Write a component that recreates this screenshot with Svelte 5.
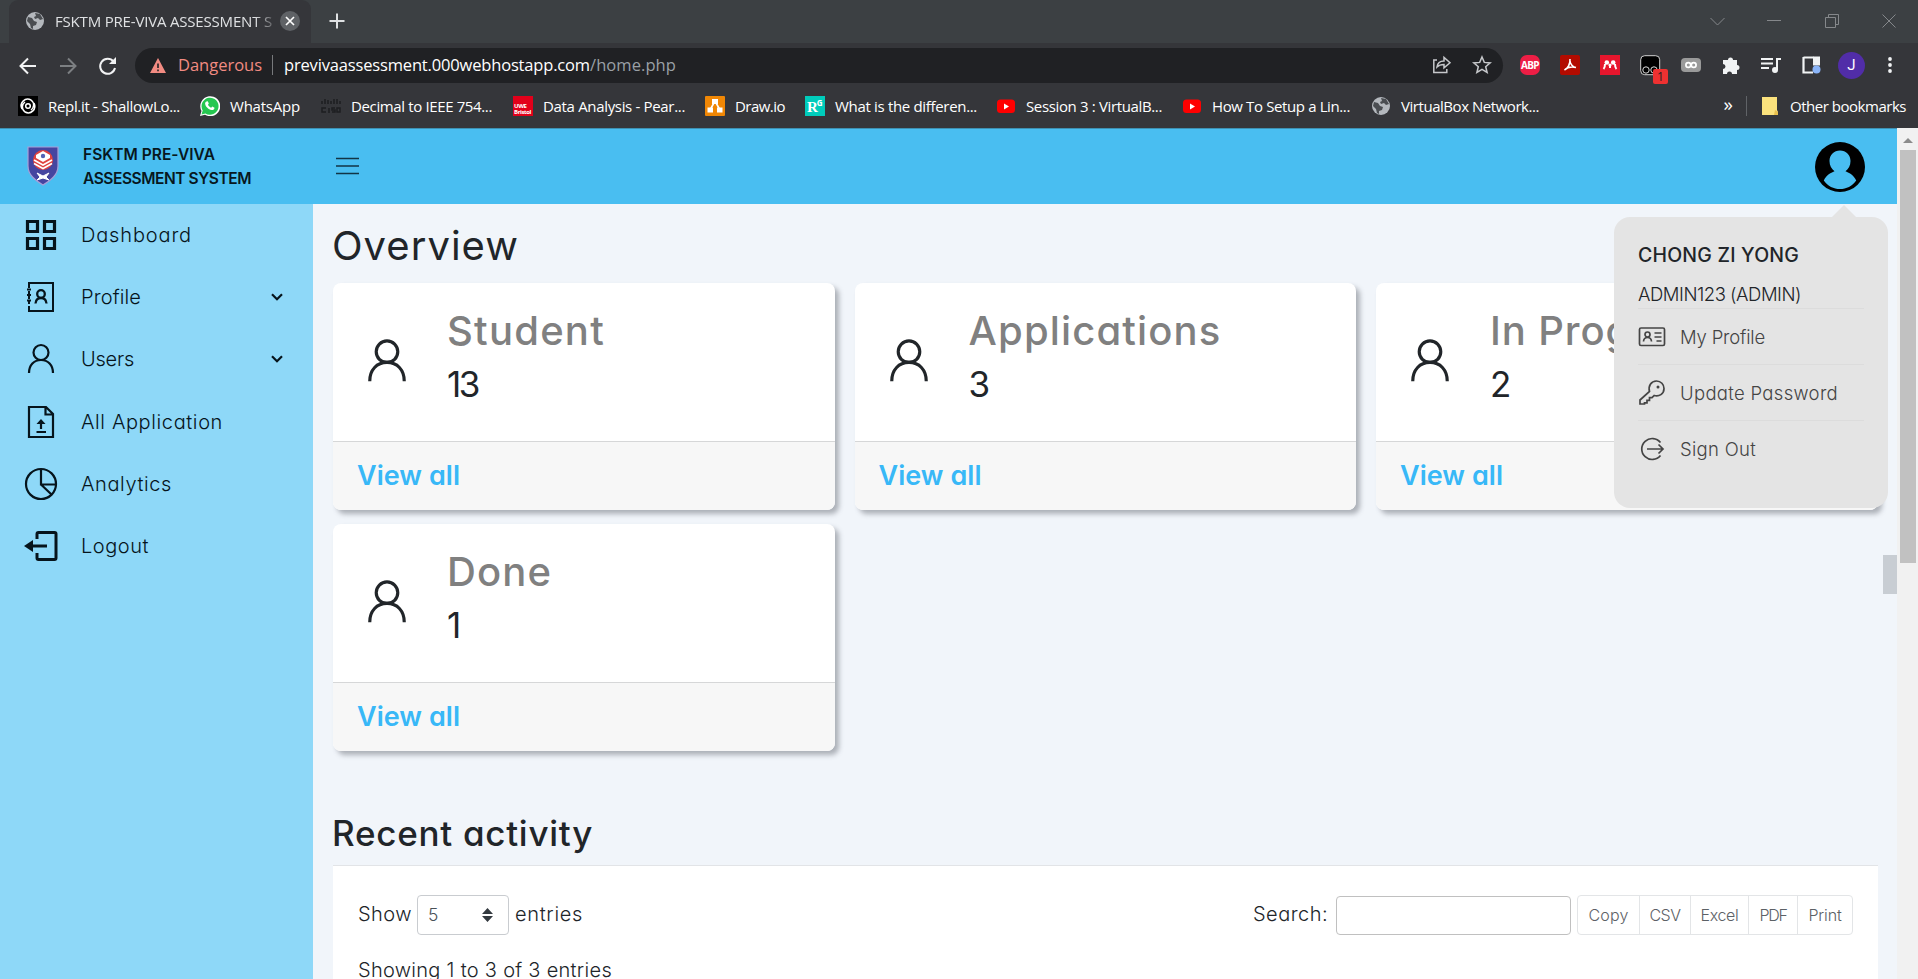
<script>
  // Spreads the letters of a label so that it fills the given width.
  function fit(node, width) {
    const n = node.textContent.length;
    node.style.letterSpacing = '0px';
    const natural = node.getBoundingClientRect().width;
    node.style.letterSpacing = (width - natural) / n + 'px';
  }

  const bookmarks = [
    { icon: 'replit', text: 'Repl.it - ShallowLo...', w: 132, gap: 20 },
    { icon: 'whatsapp', text: 'WhatsApp', w: 70, gap: 21 },
    { icon: 'cisco', text: 'Decimal to IEEE 754...', w: 141, gap: 21 },
    { icon: 'uwe', text: 'Data Analysis - Pear...', w: 142, gap: 20 },
    { icon: 'drawio', text: 'Draw.io', w: 50, gap: 20 },
    { icon: 'rg', text: 'What is the differen...', w: 142, gap: 19 },
    { icon: 'yt', text: 'Session 3 : VirtualB...', w: 136, gap: 20 },
    { icon: 'yt', text: 'How To Setup a Lin...', w: 138, gap: 21 },
    { icon: 'globe', text: 'VirtualBox Network...', w: 138, gap: 0 }
  ];

  const menu = [
    { icon: 'grid', text: 'Dashboard', w: 111 },
    { icon: 'contact', text: 'Profile', w: 60, more: true },
    { icon: 'user', text: 'Users', w: 53, more: true },
    { icon: 'file', text: 'All Application', w: 142 },
    { icon: 'chart', text: 'Analytics', w: 91 },
    { icon: 'exit', text: 'Logout', w: 68 }
  ];

  const cards = [
    { title: 'Student', count: '13', w: 158, cw: 31 },
    { title: 'Applications', count: '3', w: 253, cw: 20 },
    { title: 'In Progress', count: '2', w: 226, cw: 20 },
    { title: 'Done', count: '1', w: 105, cw: 12 }
  ];

  const account = [
    { icon: 'card', text: 'My Profile', w: 85 },
    { icon: 'key', text: 'Update Password', w: 158 },
    { icon: 'signout', text: 'Sign Out', w: 76 }
  ];

  const exports = [
    { text: 'Copy', w: 40, box: 61 },
    { text: 'CSV', w: 31, box: 51 },
    { text: 'Excel', w: 38, box: 58 },
    { text: 'PDF', w: 27, box: 49 },
    { text: 'Print', w: 33, box: 55 }
  ];
</script>

{#snippet globe()}
  <svg width="20" height="20" viewBox="0 0 20 20"><circle cx="10" cy="10" r="9" fill="#b4b8bd" /><path d="M3 6l4 1 2 3 3 1-1 3-3 1v3l-2-1-1-4-3-3zM10 2l5 1 3 5-3 1-2-2-3 1-1-2 2-1z" fill="#4a4d51" /></svg>
{/snippet}

{#snippet person(size)}
  <svg width={size} height={size} viewBox="0 0 32 32" fill="none" stroke="currentColor" stroke-width="2.200"><circle cx="16" cy="9.500" r="7.500" /><path d="M4 30c0-8 5-13 12-13s12 5 12 13" /></svg>
{/snippet}

{#snippet bookmarkIcon(name)}
  {#if name === 'globe'}
    {@render globe()}
  {:else if name === 'replit'}
    <svg width="20" height="20" viewBox="0 0 20 20"><rect width="20" height="20" fill="#000" /><g fill="none" stroke="#fff" stroke-width="1.500"><circle cx="10" cy="10" r="2.300" /><path d="M4 13C1 7 7 1 13 4c4 3 3 8 0 10M16 7c3 6-3 12-9 9-4-3-3-8 0-10" /></g></svg>
  {:else if name === 'whatsapp'}
    <svg width="20" height="20" viewBox="0 0 20 20"><path d="M0 20l1.500-5A10 10 0 1 1 5 18.700z" fill="#fff" /><path d="M1.500 18.500l1.200-4A8.500 8.500 0 1 1 5.500 17.400z" fill="#25c750" /><path d="M6.500 5.500l1.300-.2 1 2.300-.8 1.200c.7 1.400 1.700 2.300 3.200 3l1-1.200 2.300 1.100c0 1.700-1.500 2.500-2.800 2.300-3.500-.6-6.400-3.600-6.600-6.500 0-.8.600-1.700 1.400-2z" fill="#fff" /></svg>
  {:else if name === 'cisco'}
    <svg width="20" height="20" viewBox="0 0 20 20" stroke="#1d1e21" stroke-width="1.500"><path d="M1 5v3M4 3v5M7 4v4M10 5v3M13 3v5M16 3v5M19 5v3" /><path d="M5 12H1v4h4M8 12v5M14 12h-3v2h3v2h-3M16 12h3v4h-3z" fill="none" /></svg>
  {:else if name === 'uwe'}
    <span class="tile uwe"><b>UWE<br />Bristol</b></span>
  {:else if name === 'drawio'}
    <svg width="20" height="20" viewBox="0 0 20 20"><rect width="20" height="20" rx="1" fill="#f08705" /><path d="M10 5L5 14M10 5l5 9" stroke="#fff" stroke-width="1.600" /><path d="M7 3h6v5H7zM2.500 11.500h5.500v5H2.500zM12 11.500h5.500v5H12z" fill="#fff" /></svg>
  {:else if name === 'rg'}
    <span class="tile rg">R<sup>G</sup></span>
  {:else}
    <svg width="20" height="20" viewBox="0 0 20 20"><rect x="1" y="3.500" width="18" height="13.500" rx="3.500" fill="#f00" /><path d="M8 7.500l5 3-5 3z" fill="#fff" /></svg>
  {/if}
{/snippet}

<div class="screen">
  <div class="tabs">
    <div class="tab">
      {@render globe()}
      <div class="tabtitle"><span use:fit={217}>FSKTM PRE-VIVA ASSESSMENT S</span></div>
      <svg class="close" width="20" height="20" viewBox="0 0 20 20"><circle cx="10" cy="10" r="10" fill="#5f6266" /><path d="M6 6l8 8M14 6l-8 8" stroke="#fff" stroke-width="1.700" /></svg>
    </div>
    <svg class="plus" width="16" height="16" viewBox="0 0 16 16"><path d="M8 .5v15M.5 8h15" stroke="#dfe1e3" stroke-width="2" /></svg>
    <svg class="winctl" width="188" height="20" viewBox="0 0 188 20" fill="none" stroke="#85888b" stroke-width="1"><path d="M1.500 6l7 7 7-7M58 8.500h14" /><path d="M116.500 5.500h10v10h-10zM119.500 5.500v-3h10v10h-3M173.500 2.500l13 13M186.500 2.500l-13 13" /></svg>
  </div>

  <div class="toolbar">
    <svg class="nav" width="100" height="22" viewBox="0 0 100 22" fill="none" stroke-width="2"><path d="M18 11H3M10 3.500L2.500 11l7.500 7.500" stroke="#f1f2f3" /><path d="M42 11h15M50 3.500l7.500 7.500-7.500 7.500" stroke="#7c7f82" /><path d="M95.500 6.500A7.500 7.500 0 1 0 97 13" stroke="#f1f2f3" /><path d="M98 2v7h-7z" fill="#f1f2f3" /></svg>
    <div class="address">
      <svg width="16" height="15" viewBox="0 0 16 15"><path d="M8 0l8 15H0z" fill="#f28b82" /><path d="M8 5.500v4.500M8 11.500v1.800" stroke="#202124" stroke-width="1.600" /></svg>
      <span class="danger" use:fit={84}>Dangerous</span>
      <i></i>
      <span class="host" use:fit={306}>previvaassessment.000webhostapp.com</span><span class="path" use:fit={86}>/home.php</span>
      <svg class="addricons" width="60" height="20" viewBox="0 0 60 20" fill="none" stroke="#c6c8cb" stroke-width="1.500"><path d="M5 5H1.800v12.500h13V14M5 12c.5-4 3.500-6 7-6V2.500l6 5.200-6 5.200V9.500c-3 0-5 .5-7 2.500z" /><path d="M50 2l2.300 5.400 5.900.5-4.500 3.900 1.400 5.700L50 14.400l-5.100 3.100 1.400-5.700-4.500-3.900 5.900-.5z" /></svg>
    </div>
    <div class="ext">
      <span class="abp">ABP</span>
      <svg width="20" height="20" viewBox="0 0 20 20"><rect width="20" height="20" rx="2" fill="#b30b00" /><path d="M4.500 15c3-1 6-6 5.500-11M4.500 15c3-3 7-3.500 11.500-2.500M10 6c0 3 3 6 6 6.500" fill="none" stroke="#fff" stroke-width="1.600" /></svg>
      <svg width="20" height="20" viewBox="0 0 20 20"><rect width="20" height="20" fill="#e6162d" /><path d="M3.500 14c1-1 1.500-3 1.500-5M10 9v4M16.500 14c-1-1-1.500-3-1.500-5" stroke="#fff" stroke-width="2" fill="none" /><circle cx="6.800" cy="7.500" r="2.300" fill="#fff" /><circle cx="13.200" cy="7.500" r="2.300" fill="#fff" /><circle cx="10" cy="10" r="1.600" fill="#fff" /></svg>
      <span class="monkey"><svg width="21" height="21" viewBox="0 0 21 21"><rect x=".7" y=".7" width="19" height="19" rx="4" fill="#000" stroke="#d0d0d0" /><g fill="none" stroke="#ddd"><circle cx="6" cy="15" r="3.200" /><circle cx="14" cy="15" r="3.200" /></g></svg><b>1</b></span>
      <svg width="20" height="20" viewBox="0 0 20 20"><rect y="3" width="20" height="14" rx="4" fill="#9a9a9a" /><g fill="none" stroke="#fff" stroke-width="1.700"><circle cx="7.300" cy="10" r="2.400" /><circle cx="12.700" cy="10" r="2.400" /></g></svg>
      <svg width="20" height="20" viewBox="0 0 20 20"><path d="M2 5h5a2.500 2.500 0 1 1 5 0h4v5a2.500 2.500 0 1 1 0 5v4h-5a2.500 2.500 0 0 0-5 0H2v-5a2.500 2.500 0 0 0 0-5z" fill="#f1f3f4" /></svg>
      <svg width="20" height="20" viewBox="0 0 20 20" fill="none" stroke="#f1f3f4" stroke-width="2"><path d="M0 4h12M0 8.500h12M0 13h8M16 15V4h4" /><circle cx="14" cy="15" r="2" fill="#f1f3f4" /></svg>
      <svg width="20" height="20" viewBox="0 0 20 20"><path d="M2.500 2v15.500H12M2.500 2.500h10" fill="none" stroke="#f1f3f4" stroke-width="2.200" /><path d="M12 1.500h7v9h-7z" fill="#f1f3f4" /><circle cx="15.500" cy="14.500" r="4" fill="#8ab4f8" /></svg>
      <span class="me">J</span>
      <svg width="6" height="20" viewBox="0 0 6 20" fill="#f1f3f4"><circle cx="3" cy="4" r="1.900" /><circle cx="3" cy="10" r="1.900" /><circle cx="3" cy="16" r="1.900" /></svg>
    </div>
  </div>

  <div class="bookmarks">
    {#each bookmarks as b}
      <div class="bm" style:margin-right="{b.gap}px">{@render bookmarkIcon(b.icon)}<span style:width="{b.w}px"><span use:fit={b.w}>{b.text}</span></span></div>
    {/each}
    <span class="chev">»</span>
    <i></i>
    <svg width="16" height="18" viewBox="0 0 16 18"><path d="M0 0h15v13l1 2v3H0z" fill="#fbe27d" /><path d="M12 18l1-5 3 2v3z" fill="#e8c04e" /></svg>
    <span class="other"><span use:fit={116}>Other bookmarks</span></span>
  </div>

  <div class="page">
    <header>
      <svg class="logo" width="32" height="40" viewBox="0 0 32 40"><path d="M1 1h30v19c0 9-7 14-15 19C8 34 1 29 1 20z" fill="#4545a0" stroke="#a79fd8" stroke-width="1.200" /><circle cx="16" cy="14" r="10" fill="#e0433f" /><path d="M9 9l7-4 7 4v3l-7 4-7-4z" fill="#fff" /><circle cx="16" cy="10" r="2.200" fill="#5262b5" /><path d="M7 14l9 5 9-5M7 17.500l9 5 9-5" fill="none" stroke="#fff" stroke-width="1.600" /><path d="M10 27l6 3 6-3-3 4 3 3-6-2-6 2 3-3z" fill="#fff" stroke="#fff" /></svg>
      <div class="brand"><span use:fit={132}>FSKTM PRE-VIVA</span><br /><span use:fit={168}>ASSESSMENT SYSTEM</span></div>
      <svg class="burger" width="24" height="18" viewBox="0 0 24 18" stroke="#123546" stroke-width="1.500"><path d="M0 1.500h23M0 9h23M0 16.500h23" /></svg>
      <svg class="avatar" width="50" height="50" viewBox="0 0 50 50"><circle cx="25" cy="25" r="25" /><path d="M25 8.500c-6 0-10.500 4.500-10.500 10.500 0 4.500 2 8 5 10.200-4 1.600-8.500 4.300-10.700 9.200 4 5.600 9.800 8.600 16.200 8.600s12.200-3 16.200-8.600c-2.200-4.900-6.700-7.600-10.700-9.200 3-2.200 5-5.700 5-10.200 0-6-4.500-10.500-10.500-10.500z" fill="#49bef1" /></svg>
    </header>

    <div class="body">
      <aside>
        {#each menu as m}
          <div class="item">
            <span class="ico">
              {#if m.icon === 'grid'}
                <svg width="32" height="32" viewBox="0 0 32 32" fill="none" stroke="currentColor" stroke-width="3.200"><path d="M2.500 2.500h10v10h-10zM19.500 2.500h10v10h-10zM2.500 19.500h10v10h-10zM19.500 19.500h10v10h-10z" /></svg>
              {:else if m.icon === 'contact'}
                <svg width="32" height="32" viewBox="0 0 32 32" fill="none" stroke="currentColor" stroke-width="2"><path d="M4 7V2h24v28H4v-5M4 10v3M4 15v3M4 20v3M2 8.500h4M2 14h4M2 19.500h4" /><circle cx="16" cy="13" r="3.800" stroke-width="2.300" /><path d="M10.500 22.500c.3-3.700 2-5.500 5.500-5.500s5.200 1.800 5.500 5.500" stroke-width="2.300" /></svg>
              {:else if m.icon === 'user'}
                {@render person(32)}
              {:else if m.icon === 'file'}
                <svg width="32" height="34" viewBox="0 0 32 34" fill="none" stroke="currentColor" stroke-width="2.200"><path d="M4 2h17l7 7v23H4zM20.500 2v7.500H28M16 24V16M11.500 27h9.500" /><path d="M11.500 19l4.500-5 4.500 5z" fill="currentColor" stroke="none" /></svg>
              {:else if m.icon === 'chart'}
                <svg width="34" height="34" viewBox="0 0 34 34" fill="none" stroke="currentColor" stroke-width="2.200"><circle cx="17" cy="17" r="15" /><path d="M17 2v15.500h15M17 17.500l10.500 10" /></svg>
              {:else}
                <svg width="34" height="32" viewBox="0 0 34 32" fill="none" stroke="currentColor" stroke-width="3"><path d="M13 9V4q0-1.500 1.500-1.500h16Q32 2.500 32 4v24q0 1.500-1.500 1.500h-16Q13 29.500 13 28v-5M6 16h17" /><path d="M0 16l9-6v12z" fill="currentColor" stroke="none" /></svg>
              {/if}
            </span>
            <span use:fit={m.w}>{m.text}</span>
            {#if m.more}<svg class="down" width="12" height="8" viewBox="0 0 12 8" fill="none" stroke="currentColor" stroke-width="2.200"><path d="M1 1.200l5 5 5-5" /></svg>{/if}
          </div>
        {/each}
      </aside>

      <main>
        <h1><span use:fit={187}>Overview</span></h1>
        <div class="cards">
          {#each cards as c}
            <section>
              <div class="top">
                {@render person(50)}
                <div><h2><span use:fit={c.w}>{c.title}</span></h2><p><span use:fit={c.cw}>{c.count}</span></p></div>
              </div>
              <footer><span use:fit={103}>View all</span></footer>
            </section>
          {/each}
        </div>
        <h3><span use:fit={261}>Recent activity</span></h3>
        <div class="table">
          <div class="controls">
            <span use:fit={54}>Show</span>
            <div class="select">5<svg width="11" height="14" viewBox="0 0 11 14"><path d="M0 6l5.500-6L11 6zM0 8l5.500 6L11 8z" fill="#343a40" /></svg></div>
            <span use:fit={68}>entries</span>
            <span class="search"><span use:fit={75}>Search:</span></span>
            <div class="input"></div>
            <div class="btns">
              {#each exports as e}<div style:width="{e.box}px"><span use:fit={e.w}>{e.text}</span></div>{/each}
            </div>
          </div>
          <div class="info"><span use:fit={254}>Showing 1 to 3 of 3 entries</span></div>
        </div>
      </main>
    </div>

    <div class="dropdown">
      <div class="name"><span use:fit={161}>CHONG ZI YONG</span></div>
      <div class="role"><span use:fit={163}>ADMIN123 (ADMIN)</span></div>
      {#each account as a}
        <div class="acc">
          {#if a.icon === 'card'}
            <svg width="28" height="28" viewBox="0 0 28 28" fill="none" stroke="currentColor" stroke-width="1.700"><rect x="1.500" y="5" width="25" height="17.500" rx="1.500" /><circle cx="9.500" cy="11.500" r="2.500" /><path d="M5.500 18.500c.2-3 1.500-4 4-4s3.800 1 4 4M16.500 10h7M16.500 14h7M18.500 18h5" /></svg>
          {:else if a.icon === 'key'}
            <svg width="28" height="28" viewBox="0 0 28 28" fill="none" stroke="currentColor" stroke-width="1.700"><path d="M11.500 12.500C10 7 13 2 18.500 2c4.500 0 7.500 3.500 7.500 7.500 0 5.500-5 8.500-9.800 7l-2.200 2.200h-2.500v2.600H9v2.500H6.500V25H2v-4z" /><circle cx="20" cy="8" r="1.500" fill="currentColor" stroke="none" /></svg>
          {:else}
            <svg width="28" height="28" viewBox="0 0 28 28" fill="none" stroke="currentColor" stroke-width="1.700"><path d="M22.500 7.500a10.500 10.500 0 1 0 0 13M9 14h16M20.500 9.500L25 14l-4.500 4.500" /></svg>
          {/if}
          <span use:fit={a.w}>{a.text}</span>
        </div>
      {/each}
    </div>
    <div class="sidetab"></div>
    <div class="scroll"><svg width="10" height="5" viewBox="0 0 10 5"><path d="M0 5l5-5 5 5z" fill="#8b8b8b" /></svg><div></div></div>
  </div>
</div>

<style>
  :global(body) { margin: 0; overflow: hidden; }
  .screen { width: 1918px; height: 979px; overflow: hidden; display: flex; flex-direction: column; background: #35363a; color: #fff; font: 16px/20px "Open Sans", sans-serif; white-space: nowrap; box-sizing: border-box; }
  .screen :is(div, section, header, aside, main, footer) { box-sizing: border-box; }
  svg { display: block; flex: none; }
  h1, h2, h3, p { margin: 0; font-weight: 400; }

  .tabs { height: 43px; background: #3c4043; display: flex; align-items: center; flex: none; }
  .tab { margin-left: 9px; width: 302px; height: 43px; background: #35363a; border-radius: 9px 9px 0 0; display: flex; align-items: center; padding: 0 0 2px 16px; font-size: 15px; color: #dfe1e3; }
  .tabtitle { width: 217px; margin: 0 8px 0 10px; -webkit-mask-image: linear-gradient(90deg, #000 92%, rgba(0, 0, 0, .3)); mask-image: linear-gradient(90deg, #000 92%, rgba(0, 0, 0, .3)); }
  .plus { margin: -1px 0 0 18px; }
  .winctl { margin-left: auto; margin-right: 21px; }
  .toolbar { height: 45px; display: flex; align-items: center; flex: none; padding-left: 18px; }
  .nav { margin-right: 17px; }
  .address { width: 1368px; height: 35px; border-radius: 18px; background: #202124; display: flex; align-items: center; padding: 0 0 1px 15px; font-size: 16.500px; }
  .danger { color: #f28b82; margin-left: 12px; }
  .address i { width: 1px; height: 20px; background: #77797c; margin: 0 11px 0 10px; }
  .path { color: #9aa0a6; }
  .addricons { margin-left: auto; margin-right: 11px; }
  .ext { display: flex; align-items: center; gap: 20px; margin-left: 17px; padding-bottom: 1px; }
  .abp { width: 20px; height: 20px; border-radius: 7px; background: #ed1e45; font: 700 10px/20px "Open Sans", sans-serif; text-align: center; letter-spacing: -.6px; }
  .monkey { position: relative; }
  .monkey b { position: absolute; left: 13px; top: 14px; width: 15px; height: 15px; background: #ee3131; border-radius: 2px; color: #222; font: 12px/15px "Open Sans", sans-serif; text-align: center; }
  .me { width: 27px; height: 27px; border-radius: 50%; background: #512da8; font: 15px/27px Roboto, sans-serif; text-align: center; margin: 0 2px 0 -3px; }
  .bookmarks { height: 40px; flex: none; display: flex; align-items: center; padding: 0 0 4px 18px; font-size: 15px; }
  .bm { display: flex; align-items: center; gap: 10px; flex: none; }
  .tile { display: block; width: 20px; height: 20px; overflow: hidden; box-sizing: border-box; }
  .uwe { background: #e2001a; }
  .uwe b { display: block; margin: 7px 0 0 1px; font: 700 6px/6px "Open Sans", sans-serif; letter-spacing: -.4px; }
  .rg { background: #0cb; font: 700 15px/23px "Liberation Serif", serif; padding-left: 2px; letter-spacing: -1px; }
  .rg sup { font: 700 8px/8px "Open Sans", sans-serif; vertical-align: 6px; }
  .chev { margin-left: auto; font-size: 19px; margin-right: 13px; margin-top: -4px; }
  .bookmarks i { width: 1px; height: 20px; background: #606367; margin-right: 15px; }
  .other { margin: 0 12px 0 12px; width: 116px; }

  .page { position: relative; flex: 1; background: #f1f5fa; color: #212529; font-family: Inter, "Open Sans", sans-serif; font-feature-settings: "cv11"; }
  header { height: 76px; width: 1897px; background: #49bef1; border-top: 1px solid #3d91b3; display: flex; align-items: center; padding: 0 32px 0 27px; }
  .logo { margin-top: -1px; }
  .brand { margin-left: 24px; font-size: 15.500px; font-weight: 600; line-height: 24px; color: #071720; width: 253px; }
  .burger { margin-top: -2px; }
  .avatar { margin-left: auto; }
  .body { display: flex; height: 775px; width: 1897px; }
  aside { width: 313px; background: #8ed8f8; flex: none; color: #06141c; font-size: 20px; font-weight: 350; }
  .item { height: 62.300px; display: flex; align-items: center; padding: 0 0 1px 24px; }
  .ico { width: 34px; margin-right: 23px; display: flex; justify-content: center; }
  .down { margin-left: auto; margin-right: 30px; }
  main { padding: 18px 0 0 20px; width: 1565px; }
  h1 { font-size: 40px; line-height: 48px; height: 61px; margin-left: -1px; width: 300px; }
  .cards { display: grid; grid-template-columns: repeat(3, 501.500px); gap: 14px 20px; }
  section { height: 227px; border-radius: 8px; background: #fff; box-shadow: 4px 4px 5px rgba(70, 75, 85, .4); overflow: hidden; }
  .top { height: 158px; display: flex; padding: 22px 0 0 28px; }
  .top > svg { margin: 33px 34px 0 0; width: 52px; height: 46px; }
  h2 { font-size: 40px; font-weight: 500; line-height: 52px; color: #808080; }
  p { font-size: 35px; line-height: 54px; }
  footer { height: 69px; border-top: 1px solid #d6d7d8; background: #f7f7f7; padding-left: 24px; font-size: 27px; font-weight: 600; line-height: 68px; color: #38b8f7; }
  h3 { font-size: 35px; line-height: 44px; margin: 60px 0 0 -1px; height: 54px; font-weight: 500; width: 400px; }
  .table { width: 1545px; height: 140px; background: #fff; border-top: 1px solid #e2e4e7; padding: 29px 25px 0; font-size: 20px; font-weight: 350; }
  .controls { display: flex; height: 40px; align-items: center; }
  .controls > span { margin-top: -3px; }
  .select { width: 92px; height: 40px; border: 1px solid #c9ccd0; border-radius: 4px; margin: 0 6px 0 5px; display: flex; align-items: center; justify-content: space-between; padding: 0 15px 0 10px; color: #495057; font-size: 17.500px; }
  .search { margin-left: auto; width: 75px; }
  .input { width: 235px; height: 39px; border: 1px solid #c0c0c0; border-radius: 4px; margin: 0 6px 0 8px; }
  .btns { width: 276px; height: 40px; border: 1px solid #e3e5e7; border-radius: 4px; display: flex; font-size: 16px; color: #5c6166; line-height: 38px; text-align: center; }
  .btns div + div { border-left: 1px solid #e3e5e7; }
  .info { margin-top: 20px; line-height: 30px; }

  .dropdown { position: absolute; left: 1614px; top: 89px; width: 274px; height: 291px; border-radius: 16px; background: #e4e4e4; padding: 24px 24px 0; }
  .dropdown::before { content: ""; position: absolute; left: 218px; top: -12px; border: 12px solid transparent; border-top: 0; border-bottom-color: #e4e4e4; }
  .name { font-size: 19.500px; font-weight: 500; line-height: 29px; }
  .role { font-size: 18.500px; font-weight: 350; line-height: 28px; margin-top: 10px; height: 28px; }
  .acc { height: 56px; border-top: 1px solid #dcdcdc; display: flex; align-items: center; font-size: 18.500px; font-weight: 350; color: #444; }
  .acc svg { margin-right: 14px; }
  .sidetab { position: absolute; left: 1883px; top: 427px; width: 14px; height: 39px; background: #c8cdd3; }
  .scroll { position: absolute; left: 1897px; top: 0; width: 21px; height: 851px; background: #f1f1f1; padding: 10px 2px 0 3px; }
  .scroll svg { margin: 0 auto 7px; }
  .scroll div { height: 413px; background: #c1c1c1; }
</style>
